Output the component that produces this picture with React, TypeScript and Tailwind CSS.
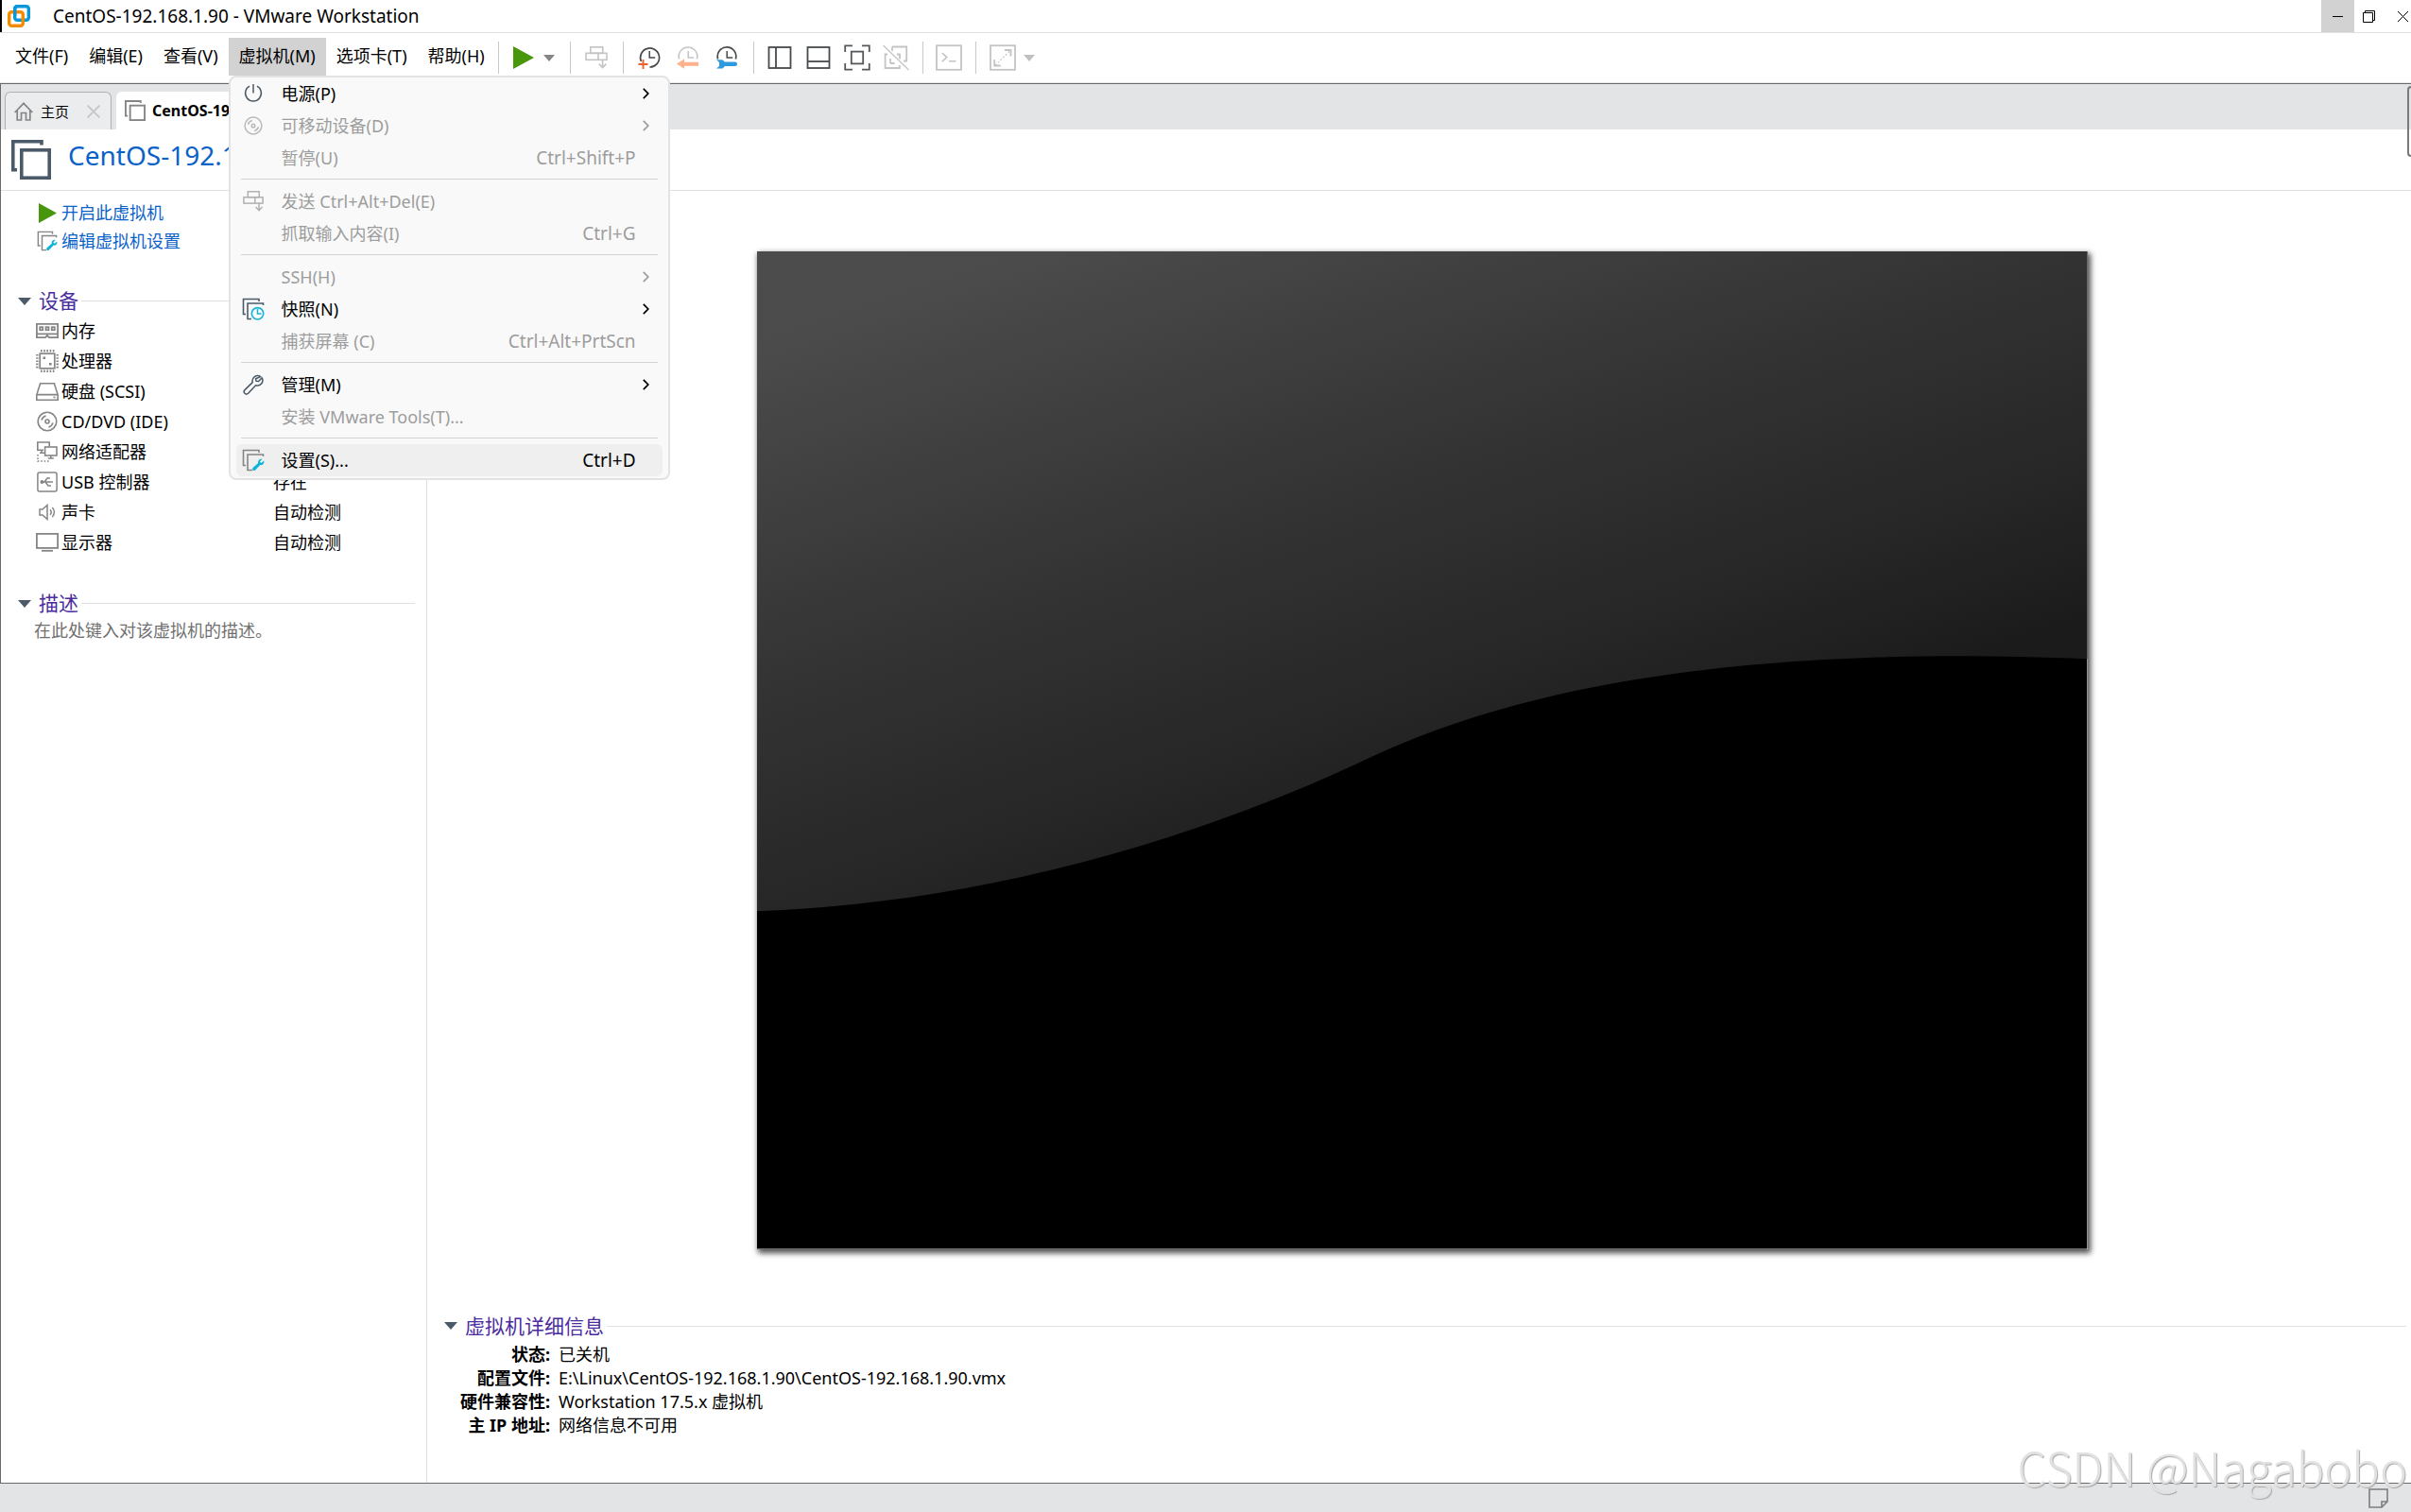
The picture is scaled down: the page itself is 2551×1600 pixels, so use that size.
import type { ReactNode } from 'react';
import clsx from 'clsx';

type IconProps = { className?: string };

const VmwareLogo = () => (
    <svg width="24" height="24" viewBox="0 0 24 24" fill="none" strokeWidth="3.4">
        <rect x="7.7" y="1.7" width="14.6" height="14.6" rx="2.5" stroke="#0a97d9" />
        <rect x="1.7" y="7.7" width="14.6" height="14.6" rx="2.5" stroke="#f38b00" />
        <path d="M7.7 12V4.2a2.5 2.5 0 0 1 2.5-2.5" stroke="#0a97d9" />
    </svg>
);

const PlayIcon = ({ className }: IconProps) => (
    <svg className={className} viewBox="0 0 22 24" fill="#48960c" preserveAspectRatio="none">
        <path d="M0 0l22 12L0 24z" />
    </svg>
);

const CaretIcon = ({ className }: IconProps) => (
    <svg className={className} viewBox="0 0 14 8" fill="currentColor">
        <path d="M0 0h14L7 8z" />
    </svg>
);

const SendKeysIcon = ({ className }: IconProps) => (
    <svg className={className} viewBox="0 0 24 26" fill="none" stroke="currentColor" strokeWidth="1.6">
        <rect x="5.8" y="1.8" width="13" height="6.5" />
        <rect x="1" y="8.3" width="22" height="7" />
        <path d="M14 8.3v7M18.6 15v8M14.8 19.6l3.8 4 3.8-4" />
    </svg>
);

const SnapshotTakeIcon = () => (
    <svg width="24" height="24" viewBox="0 0 24 24" fill="none">
        <path d="M3.4 16a10 10 0 1 1 9 6" stroke="#464a4d" strokeWidth="1.7" />
        <path d="M12.2 5v7h6" stroke="#464a4d" strokeWidth="1.5" />
        <path d="M5.5 14v10M0.5 19h10" stroke="#e8622a" strokeWidth="1.9" />
    </svg>
);

const SnapshotRevertIcon = () => (
    <svg width="24" height="24" viewBox="0 0 24 24" fill="none">
        <path d="M2.6 13.5a9.8 9.8 0 1 1 18.8 0" stroke="#c4c4c4" strokeWidth="1.6" />
        <path d="M12.2 5v7h6" stroke="#c4c4c4" strokeWidth="1.5" />
        <path d="M0 18.5l8-5v3.2h15v4H8v3.1z" fill="#ffb18c" />
    </svg>
);

const SnapshotManageIcon = () => (
    <svg width="24" height="24" viewBox="0 0 24 24" fill="none">
        <path d="M2.6 13.5a9.8 9.8 0 1 1 18.8 0" stroke="#464a4d" strokeWidth="1.7" />
        <path d="M12.2 5v7h6" stroke="#464a4d" strokeWidth="1.5" />
        <path d="M1 14.2h5.2c2 0 2.8 1.2 3.4 2.3h11.2c3 0 3 4.4 0 4.4H9.6c-.6 1.3-1.6 2.6-3.4 2.6H1l3-2.5v-4z" fill="#2e9ade" />
    </svg>
);

const SidePanelIcon = () => (
    <svg width="26" height="26" viewBox="0 0 26 26" fill="none" stroke="#464a4d" strokeWidth="1.8">
        <rect x="1.5" y="2" width="23" height="22" />
        <path d="M9 2v22" />
    </svg>
);

const BottomPanelIcon = () => (
    <svg width="26" height="26" viewBox="0 0 26 26" fill="none" stroke="#464a4d" strokeWidth="1.8">
        <rect x="1.5" y="2" width="23" height="22" />
        <path d="M1.5 17h23" />
    </svg>
);

const FullScreenIcon = () => (
    <svg width="28" height="28" viewBox="0 0 28 28" fill="none" stroke="#55585b" strokeWidth="1.8">
        <path d="M1.2 8V1.4H9M19 1.4h7.8V8M26.8 20v6.6H19M9 26.6H1.2V20" />
        <rect x="7.8" y="7.6" width="12.4" height="12.8" />
    </svg>
);

const UnityIcon = () => (
    <svg width="28" height="28" viewBox="0 0 28 28" fill="none" stroke="#c4c4c4" strokeWidth="1.8">
        <path d="M10 2.5h15.2v15H22M5 10.5H2.6V25h15.2v-3M10 7V2.5M15 10.5h3v5M8 20h4.5M8 15v5" />
        <path d="M0.5 1l27 26" strokeWidth="1.2" />
    </svg>
);

const ConsoleIcon = () => (
    <svg width="28" height="28" viewBox="0 0 28 28" fill="none" stroke="#c4c4c4" strokeWidth="1.8">
        <rect x="1" y="1.2" width="26" height="25.6" />
        <path d="M6.8 9l5 4.6-5 4.6M14 17.8h7.5" strokeWidth="1.6" />
    </svg>
);

const StretchIcon = () => (
    <svg width="28" height="28" viewBox="0 0 28 28" fill="none" stroke="#c4c4c4" strokeWidth="1.8">
        <rect x="1" y="1.2" width="26" height="25.6" />
        <path d="M16 6h6.5v6.5M5.2 16v6.5h6.5" />
        <path d="M6 22L22 6.5" strokeDasharray="1.8 2" strokeWidth="1.3" />
    </svg>
);

const HomeIcon = () => (
    <svg width="20" height="20" viewBox="0 0 20 20" fill="none" stroke="#858585" strokeWidth="1.7">
        <path d="M.7 11L10 1.3 19.3 11M3.2 9v10h4.3v-7.5h5V19h4.3V9" />
    </svg>
);

const VmIcon = ({ className }: IconProps) => (
    <svg className={className} viewBox="0 0 42 42" fill="none" stroke="currentColor" strokeWidth="3.6">
        <path d="M32 5.5V1.8H1.8v30H6" />
        <rect x="10.8" y="10.8" width="29.4" height="29.4" />
    </svg>
);

const PowerIcon = () => (
    <svg width="20" height="20" viewBox="0 0 20 20" fill="none" stroke="#4a5a68" strokeWidth="1.5">
        <path d="M6 2.2a8.4 8.4 0 1 0 8 0M10 0v9.5" />
    </svg>
);

const DiscIcon = ({ className }: IconProps) => (
    <svg className={className} viewBox="0 0 22 22" fill="none" stroke="currentColor" strokeWidth="1.6">
        <circle cx="11" cy="11" r="9.8" />
        <circle cx="11" cy="11" r="2" />
        <path d="M5 9.6A6.4 6.4 0 0 1 9.6 5M17 12.4a6.4 6.4 0 0 1-4.6 4.6" />
    </svg>
);

const VmSnapshotIcon = () => (
    <svg width="24" height="24" viewBox="0 0 24 24" fill="none">
        <path d="M18 4V1.5H1.5v16H4M22.5 8V6H6v16.5h4" stroke="#4a5a68" strokeWidth="1.6" />
        <circle cx="16.5" cy="16.8" r="6.2" stroke="#17b5d9" strokeWidth="1.7" />
        <path d="M16.5 12v5h4" stroke="#17b5d9" strokeWidth="1.5" />
    </svg>
);

const WrenchIcon = () => (
    <svg width="22" height="22" viewBox="0 0 22 22" fill="none" stroke="#4a5a68" strokeWidth="1.5" strokeLinejoin="round">
        <path d="M18.8 2.6a5.6 5.6 0 0 0-8.6 6L2 16.6a2.5 2.5 0 0 0 3.6 3.6l8-8.4a5.6 5.6 0 0 0 6.6-8l-3.6 3.8-2.6-.4-.4-2.4z" />
    </svg>
);

const VmSettingsIcon = ({ className }: IconProps) => (
    <svg className={className} viewBox="0 0 24 24" fill="none">
        <path d="M18 4V1.5H1.5v16H4M22.5 8V6H6v16.5h5" stroke="#858585" strokeWidth="1.6" />
        <path d="M21.5 10.8l-2.6 2.8 1.5 1.5 2.9-2.5c.6 3-1.4 5-4 4.4l-5.2 5.4c-1.7 1.6-4.1-.6-2.5-2.4l5.6-5.1c-.6-2.6 1.6-4.8 4.3-4.1z" fill="#0cb4d8" />
    </svg>
);

const MemoryIcon = () => (
    <svg width="24" height="16" viewBox="0 0 24 16" fill="none" stroke="#858585" strokeWidth="1.8">
        <path d="M.9.9h22.2v14.2H14l-2-2-2 2H.9zM.8 11.4h22.4" />
        <rect x="4.2" y="4.2" width="3" height="3" />
        <rect x="10.5" y="4.2" width="3" height="3" />
        <rect x="16.8" y="4.2" width="3" height="3" />
    </svg>
);

const CpuIcon = () => (
    <svg width="24" height="24" viewBox="0 0 24 24" fill="none" stroke="#858585">
        <rect x="4.2" y="4.2" width="15.6" height="15.6" strokeWidth="1.7" />
        <path d="M5 1.3h14.5M5 22.7h14.5M1.3 5v14.5M22.7 5v14.5" strokeWidth="2.4" strokeDasharray="1.6 1.6" />
        <path d="M7.5 8.8h2.6M14 15.2h2.6" strokeWidth="2.6" />
    </svg>
);

const HardDiskIcon = () => (
    <svg width="24" height="19" viewBox="0 0 24 19" fill="none" stroke="#858585" strokeWidth="1.6">
        <path d="M4.6.8h14.8l3.8 12v5.4H.8v-5.4zM.8 12.6h22.4" />
        <path d="M18.5 15.4h2" />
    </svg>
);

const NetworkIcon = () => (
    <svg width="22" height="22" viewBox="0 0 22 22" fill="none" stroke="#858585" strokeWidth="1.6">
        <path d="M7 9.2H.8V1h12.4v4.6" />
        <rect x="8.6" y="6" width="12.4" height="9" />
        <path d="M14.8 15v3M11.8 18h6M5 9.5v3M3 12.3h5" />
        <path d="M1 14v7h12" strokeDasharray="1.6 1.8" />
    </svg>
);

const UsbIcon = () => (
    <svg width="22" height="22" viewBox="0 0 22 22" fill="none" stroke="#858585" strokeWidth="1.5">
        <rect x=".9" y=".9" width="20.2" height="20.2" rx="2" />
        <path d="M5 11h12M8 11l3-4h3M9 11l3 4h3" />
        <circle cx="5.4" cy="11" r="1.2" fill="#858585" />
    </svg>
);

const SpeakerIcon = () => (
    <svg width="18" height="18" viewBox="0 0 18 18" fill="none" stroke="#858585" strokeWidth="1.5">
        <path d="M1 6v6h3l5 4.5v-15L4 6zM12 6.2c1.4 1.6 1.4 4 0 5.6M14.3 4c2.8 2.8 2.8 7.2 0 10" />
    </svg>
);

const DisplayIcon = () => (
    <svg width="24" height="20" viewBox="0 0 24 20" fill="none" stroke="#858585" strokeWidth="1.8">
        <rect x=".9" y=".9" width="22.2" height="15" />
        <path d="M6 18.8h12" />
    </svg>
);

const NoteIcon = () => (
    <svg width="21" height="21" viewBox="0 0 21 21" fill="none" stroke="#7d7d7d" strokeWidth="1.6">
        <path d="M1 1h19v13l-6 6H1zM20 14h-6v6" />
    </svg>
);

const ChevronIcon = () => (
    <svg width="7" height="12" viewBox="0 0 7 12" fill="none" stroke="currentColor" strokeWidth="1.7">
        <path d="M.8.8L5.8 6l-5 5.2" />
    </svg>
);

type MenuEntry = {
    label: string;
    icon?: ReactNode;
    shortcut?: string;
    submenu?: boolean;
    disabled?: boolean;
    active?: boolean;
};

const vmMenu: MenuEntry[][] = [
    [
        { label: '电源(P)', icon: <PowerIcon />, submenu: true },
        { label: '可移动设备(D)', icon: <DiscIcon className="size-5 text-[#b8b8b8]" />, submenu: true, disabled: true },
        { label: '暂停(U)', shortcut: 'Ctrl+Shift+P', disabled: true }
    ],
    [
        { label: '发送 Ctrl+Alt+Del(E)', icon: <SendKeysIcon className="h-6 w-[22px] text-[#b0b0b0]" />, disabled: true },
        { label: '抓取输入内容(I)', shortcut: 'Ctrl+G', disabled: true }
    ],
    [
        { label: 'SSH(H)', submenu: true, disabled: true },
        { label: '快照(N)', icon: <VmSnapshotIcon />, submenu: true },
        { label: '捕获屏幕 (C)', shortcut: 'Ctrl+Alt+PrtScn', disabled: true }
    ],
    [
        { label: '管理(M)', icon: <WrenchIcon />, submenu: true },
        { label: '安装 VMware Tools(T)...', disabled: true }
    ],
    [{ label: '设置(S)...', icon: <VmSettingsIcon className="size-6" />, shortcut: 'Ctrl+D', active: true }]
];

const devices: { name: string; icon: ReactNode; value?: string }[] = [
    { name: '内存', icon: <MemoryIcon /> },
    { name: '处理器', icon: <CpuIcon /> },
    { name: '硬盘 (SCSI)', icon: <HardDiskIcon /> },
    { name: 'CD/DVD (IDE)', icon: <DiscIcon className="size-[22px] text-[#858585]" /> },
    { name: '网络适配器', icon: <NetworkIcon /> },
    { name: 'USB 控制器', icon: <UsbIcon />, value: '存在' },
    { name: '声卡', icon: <SpeakerIcon />, value: '自动检测' },
    { name: '显示器', icon: <DisplayIcon />, value: '自动检测' }
];

const details = [
    ['状态:', '已关机'],
    ['配置文件:', 'E:\\Linux\\CentOS-192.168.1.90\\CentOS-192.168.1.90.vmx'],
    ['硬件兼容性:', 'Workstation 17.5.x 虚拟机'],
    ['主 IP 地址:', '网络信息不可用']
];

function VmMenu() {
    return (
        <div role="menu" className="absolute left-0 top-full z-20 w-[467px] rounded-lg border-2 border-[#e3e3e3] bg-[#f9f9f9] px-[6px] pb-[2px]">
            {vmMenu.map((group, index) => (
                <div key={index}>
                    {index > 0 && <hr className="mx-[5px] mt-[5px] mb-[6px] border-[#d4d4d4]" />}
                    {group.map((item) => (
                        <button
                            key={item.label}
                            role="menuitem"
                            disabled={item.disabled}
                            className={clsx(
                                'flex h-[34px] w-full items-center rounded-md pl-[5px] pr-[14px] text-left whitespace-nowrap',
                                item.disabled ? 'text-[#9d9d9d]' : 'text-black',
                                item.active && 'bg-[#efefef]'
                            )}
                        >
                            <span className="flex w-[26px] justify-center">{item.icon}</span>
                            <span className="ml-[17px] flex-1">{item.label}</span>
                            <span className="mr-[7px] text-[19px]">{item.shortcut}</span>
                            <span className="w-[7px]">{item.submenu && <ChevronIcon />}</span>
                        </button>
                    ))}
                </div>
            ))}
        </div>
    );
}

function MenuItem({ label, open = false, children }: { label: string; open?: boolean; children?: ReactNode }) {
    return (
        <div className="relative">
            <button className={clsx('h-10 px-[11px] pb-[2px]', open && 'bg-[#d2d2d2]')}>{label}</button>
            {children}
        </div>
    );
}

function ToolButton({ label, children }: { label: string; children: ReactNode }) {
    return (
        <button aria-label={label} className="flex h-10 min-w-[41px] items-center justify-center">
            {children}
        </button>
    );
}

const ToolDivider = () => <div className="mx-[7px] h-[34px] w-px bg-[#c8c8c8]" />;

function SectionTitle({ children }: { children: ReactNode }) {
    return (
        <div className="flex h-[31px] items-center">
            <button className="flex items-center gap-2 text-[21px] leading-[31px] text-[#4a2c9e]">
                <CaretIcon className="h-2 w-[14px] text-[#4a5a68]" />
                {children}
            </button>
            <div className="ml-[3px] h-px flex-1 bg-[#e0e0e0]" />
        </div>
    );
}

export default function App() {
    return (
        <div className="relative flex min-h-screen flex-col overflow-hidden bg-white font-['Noto_Sans','Noto_Sans_CJK_SC',sans-serif] text-[18px] leading-6 text-black">
            <header className="flex h-[35px] items-center border-b border-[#e0e0e0]">
                <div className="h-full w-[2px] bg-black" />
                <div className="ml-[6px]">
                    <VmwareLogo />
                </div>
                <h1 className="ml-6 flex-1 text-[19px]">CentOS-192.168.1.90 - VMware Workstation</h1>
                <button aria-label="最小化" className="flex h-full w-[35px] items-center justify-center bg-[#d2d2d2]">
                    <svg width="11" height="1" viewBox="0 0 11 1"><path d="M0 0h11v1H0z" /></svg>
                </button>
                <button aria-label="还原" className="flex h-full w-[31px] items-center justify-center">
                    <svg width="13" height="13" viewBox="0 0 13 13" fill="none" stroke="#000">
                        <path d="M.5 2.5h10v10H.5zM2.5 2.5v-2h10v10h-2" />
                    </svg>
                </button>
                <button aria-label="关闭" className="flex h-full w-[29px] items-center justify-end pr-[3px]">
                    <svg width="11" height="11" viewBox="0 0 11 11" stroke="#000">
                        <path d="M0 0l11 11M11 0L0 11" />
                    </svg>
                </button>
            </header>

            <nav className="flex h-[53px] items-start border-b border-[#e8e8e8] pt-[5px] pl-[5px]">
                <MenuItem label="文件(F)" />
                <MenuItem label="编辑(E)" />
                <MenuItem label="查看(V)" />
                <MenuItem label="虚拟机(M)" open>
                    <VmMenu />
                </MenuItem>
                <MenuItem label="选项卡(T)" />
                <MenuItem label="帮助(H)" />
                <div className="flex items-center pt-[1px]">
                    <div className="mr-[7px] ml-[3px] h-[34px] w-px bg-[#c8c8c8]" />
                    <button aria-label="开启此虚拟机" className="flex h-10 w-[61px] items-center justify-center gap-[10px]">
                        <PlayIcon className="h-6 w-[22px]" />
                        <CaretIcon className="h-[7px] w-3 text-[#858585]" />
                    </button>
                    <ToolDivider />
                    <ToolButton label="发送 Ctrl+Alt+Del"><SendKeysIcon className="h-[26px] w-6 text-[#c4c4c4]" /></ToolButton>
                    <ToolDivider />
                    <ToolButton label="拍摄快照"><SnapshotTakeIcon /></ToolButton>
                    <ToolButton label="恢复快照"><SnapshotRevertIcon /></ToolButton>
                    <ToolButton label="管理快照"><SnapshotManageIcon /></ToolButton>
                    <ToolDivider />
                    <ToolButton label="显示库"><SidePanelIcon /></ToolButton>
                    <ToolButton label="显示缩略图栏"><BottomPanelIcon /></ToolButton>
                    <ToolButton label="全屏"><FullScreenIcon /></ToolButton>
                    <ToolButton label="Unity"><UnityIcon /></ToolButton>
                    <ToolDivider />
                    <ToolButton label="控制台视图"><ConsoleIcon /></ToolButton>
                    <ToolDivider />
                    <button aria-label="自由拉伸" className="flex h-10 items-center gap-2 pl-[7px]">
                        <StretchIcon />
                        <CaretIcon className="h-[7px] w-3 text-[#c0c0c0]" />
                    </button>
                </div>
            </nav>

            <div className="flex flex-1 flex-col border-t border-l border-[#6a6a6a]">
                <div className="flex h-12 items-end gap-[5px] bg-[#e3e4e6] pl-1">
                    <div className="flex h-10 w-[113px] items-center rounded-t-md border border-b-0 border-[#b0b0b0] bg-[#ebecee] pl-[9px]">
                        <HomeIcon />
                        <button className="ml-2 text-[15px]">主页</button>
                        <button aria-label="关闭主页" className="ml-[19px]">
                            <svg width="14" height="14" viewBox="0 0 14 14" stroke="#c6c6c6" strokeWidth="1.8">
                                <path d="M.5.5l13 13M13.5.5l-13 13" />
                            </svg>
                        </button>
                    </div>
                    <div className="flex h-10 items-center gap-[7px] rounded-t-md bg-white px-[9px]">
                        <VmIcon className="size-[22px] text-[#858585]" />
                        <button className="text-[16px] font-bold">CentOS-192.168.1.90</button>
                    </div>
                </div>

                <div className="flex h-[65px] items-center border-b border-[#e0e0e0] pl-[11px]">
                    <VmIcon className="size-[42px] text-[#4a5a68]" />
                    <h2 className="ml-[18px] pb-[10px] text-[28px] leading-9 text-[#0a62c8]">CentOS-192.168.1.90</h2>
                </div>

                <div className="flex flex-1">
                    <aside className="w-[451px] shrink-0 border-r border-[#e0e0e0] pt-2 pr-3 pl-[18px]">
                        <div className="pl-[19px] text-[#0a62c8]">
                            <a href="#start" className="flex h-[30px] items-center gap-[3px]">
                                <span className="flex w-6 justify-center">
                                    <PlayIcon className="h-[21px] w-[19px]" />
                                </span>
                                开启此虚拟机
                            </a>
                            <a href="#settings" className="flex h-[30px] items-center gap-[3px]">
                                <span className="flex w-6 justify-center">
                                    <VmSettingsIcon className="size-[22px]" />
                                </span>
                                编辑虚拟机设置
                            </a>
                        </div>

                        <section className="mt-[33px]">
                            <SectionTitle>设备</SectionTitle>
                            <ul className="pl-[19px]">
                                {devices.map((device) => (
                                    <li key={device.name} className="flex h-8 items-center">
                                        <span className="flex w-6 justify-center">{device.icon}</span>
                                        <span className="ml-[3px] w-[224px]">{device.name}</span>
                                        <span>{device.value}</span>
                                    </li>
                                ))}
                            </ul>
                        </section>

                        <section className="mt-[33px]">
                            <SectionTitle>描述</SectionTitle>
                            <p className="pt-[1px] pl-[17px] text-[#707070]">在此处键入对该虚拟机的描述。</p>
                        </section>
                    </aside>

                    <main className="flex flex-1 flex-col pt-16 pr-[5px] pl-3">
                        <svg
                            className="mx-auto aspect-[4/3] w-[67.6%] shadow-[2px_3px_6px_1px_rgba(0,0,0,0.7)]"
                            viewBox="0 0 1406 1055"
                            preserveAspectRatio="none"
                        >
                            <defs>
                                <linearGradient id="sheen" gradientUnits="userSpaceOnUse" x1="0" y1="0" x2="265" y2="780">
                                    <stop offset="0" stopColor="#4c4c4c" />
                                    <stop offset="0.12" stopColor="#4b4b4b" />
                                    <stop offset="0.52" stopColor="#343434" />
                                    <stop offset="0.82" stopColor="#262626" />
                                    <stop offset="1" stopColor="#1b1b1b" />
                                </linearGradient>
                            </defs>
                            <rect width="1406" height="1055" fill="#000" />
                            <path d="M0 0H1406V431C1030 415 800 465 653 533C450 630 220 690 0 698z" fill="url(#sheen)" />
                        </svg>

                        <section className="mt-[66px] pl-[6px]">
                            <SectionTitle>虚拟机详细信息</SectionTitle>
                            <table className="mt-[2px] -ml-[6px]">
                                <tbody>
                                    {details.map(([label, value]) => (
                                        <tr key={label} className="h-[25px]">
                                            <th scope="row" className="w-[118px] p-0 text-right leading-[25px] font-bold whitespace-nowrap">{label}</th>
                                            <td className="p-0 pl-[9px] leading-[25px]">{value}</td>
                                        </tr>
                                    ))}
                                </tbody>
                            </table>
                        </section>
                    </main>
                </div>
            </div>

            <footer className="flex h-[31px] items-center justify-end border-t border-[#6a6a6a] bg-[#e3e4e6] pr-6">
                <NoteIcon />
            </footer>

            <div className="absolute top-[91px] right-0 h-[75px] w-1 rounded-l-md border-2 border-r-0 border-[#7a7a7a]" />
            <div className="pointer-events-none absolute right-1 bottom-5 font-['Noto_Sans_CJK_SC',sans-serif] text-[49px] leading-[56px] font-light text-[#e2e2e2] [text-shadow:1px_1px_1px_#a8a8a8]">
                CSDN @Nagabobo
            </div>
        </div>
    );
}
